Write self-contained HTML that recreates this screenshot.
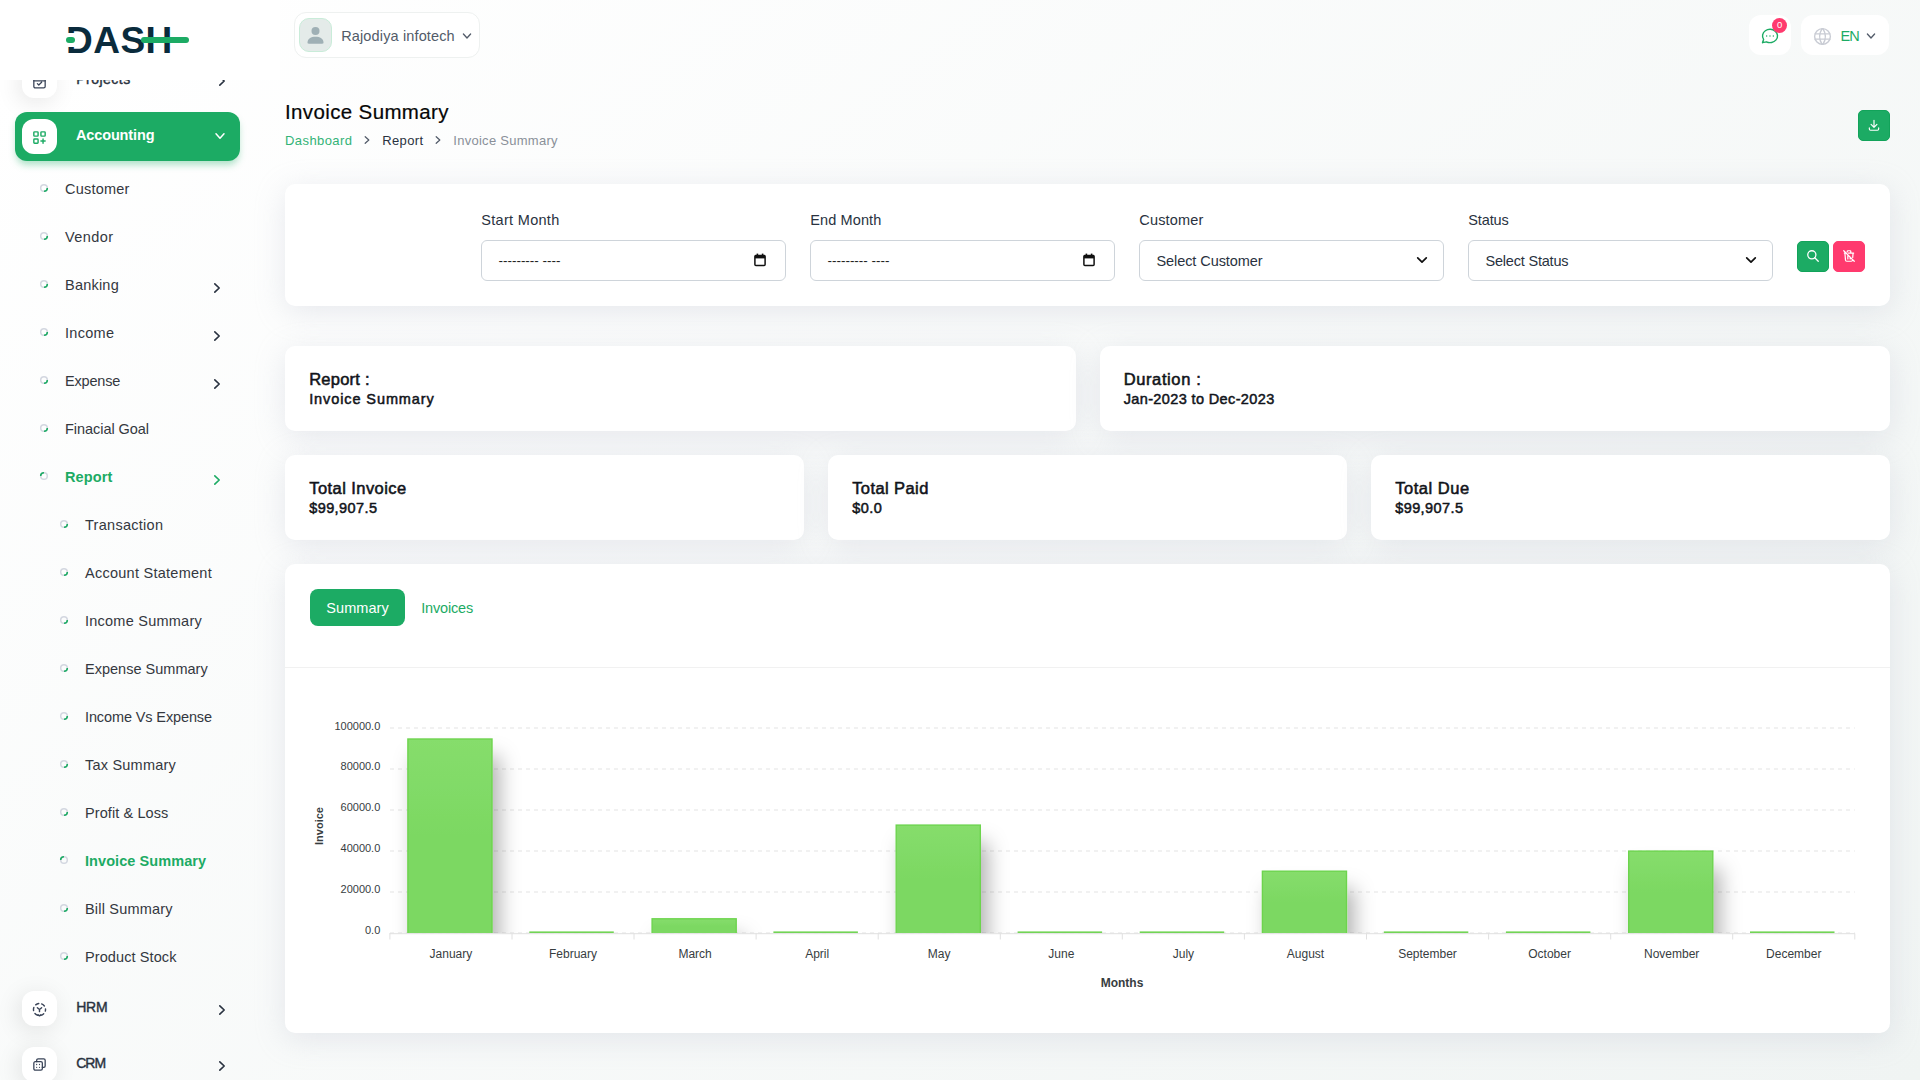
<!DOCTYPE html>
<html lang="en"><head><meta charset="utf-8"><title>Invoice Summary</title>
<style>

html,body{margin:0;padding:0}
body{width:1920px;height:1080px;overflow:hidden;position:relative;font-family:"Liberation Sans",sans-serif;color:#293240;
 background:linear-gradient(141.55deg,rgba(240,244,243,0) 3.46%,#f0f4f3 99.86%),#fff;}
.t{position:absolute;white-space:nowrap;line-height:1;}
.a{position:absolute;display:block;overflow:visible}
.card{position:absolute;background:#fff;border-radius:10px;box-shadow:0 6px 30px rgba(182,186,203,.3)}
.ibox{position:absolute;width:35px;height:35px;border-radius:12px;background:#fff;box-shadow:-3px 4px 23px rgba(0,0,0,.1)}
.inp{position:absolute;height:39px;width:303px;border:1px solid #ced4da;border-radius:6px;background:#fff}
.btn{position:absolute;width:30px;height:29px;border-radius:5px;border:1px solid}
nav,header,main{position:absolute;left:0;top:0}

</style></head><body>
<nav>
<div class="ibox" style="left:22px;top:62.5px"></div>
<svg class="a" style="left:31.2px;top:72.5px" width="17" height="17" viewBox="0 0 24 24" fill="none" stroke="#3a4458" stroke-width="1.8" stroke-linecap="round" stroke-linejoin="round"><rect x="4" y="5" width="16" height="16" rx="2"/><path d="M16 3v4M8 3v4M4 11h16M9 15l2 2l4-4" /></svg>
<span class="t" style="letter-spacing:0.49px;left:76.2px;top:72px;font-size:14px;font-weight:400;color:#293240;-webkit-text-stroke:.4px #293240;">Projects</span>
<svg class="a" style="left:215.5px;top:75px" width="12" height="12" viewBox="-6 -6 12 12"><path d="M-2.2 -4.2 L2.2 0 L-2.2 4.2" fill="none" stroke="#293240" stroke-width="1.6" stroke-linecap="round" stroke-linejoin="round"/></svg>
<div style="position:absolute;left:15px;top:112px;width:225px;height:49px;border-radius:12px;background:#1cab64;box-shadow:0 5px 7px -1px rgba(28,171,100,.35)"></div>
<div class="ibox" style="left:22px;top:119px;box-shadow:none"></div>
<svg class="a" style="left:31.2px;top:128.8px" width="17" height="17" viewBox="0 0 24 24" fill="none" stroke="#1cab64" stroke-width="2" stroke-linecap="round" stroke-linejoin="round"><rect x="4" y="4" width="6" height="6" rx="1"/><rect x="14" y="4" width="6" height="6" rx="1"/><rect x="4" y="14" width="6" height="6" rx="1"/><path d="M14 17h6M17 14v6"/></svg>
<span class="t" style="letter-spacing:-0.14px;left:76px;top:128px;font-size:14.5px;font-weight:700;color:#fff;">Accounting</span>
<svg class="a" style="left:213.4px;top:129px" width="14" height="14" viewBox="-7 -7 14 14"><path d="M-4 -2.2 L0 2.2 L4 -2.2" fill="none" stroke="#fff" stroke-width="1.5" stroke-linecap="round" stroke-linejoin="round"/></svg>
<svg class="a" style="left:38px;top:181.9px" width="12" height="12" viewBox="-6 -6 12 12"><circle r="3.3" fill="none" stroke="#d3d7e0" stroke-width="1.5"/><path d="M3.3 0 A3.3 3.3 0 0 1 0 3.3" transform="rotate(0)" fill="none" stroke="#1cab64" stroke-width="1.6"/></svg>
<span class="t" style="letter-spacing:0.22px;left:65px;top:182px;font-size:14.5px;font-weight:400;color:#34383f;">Customer</span>
<svg class="a" style="left:38px;top:229.9px" width="12" height="12" viewBox="-6 -6 12 12"><circle r="3.3" fill="none" stroke="#d3d7e0" stroke-width="1.5"/><path d="M3.3 0 A3.3 3.3 0 0 1 0 3.3" transform="rotate(0)" fill="none" stroke="#1cab64" stroke-width="1.6"/></svg>
<span class="t" style="letter-spacing:0.41px;left:65px;top:230px;font-size:14.5px;font-weight:400;color:#34383f;">Vendor</span>
<svg class="a" style="left:38px;top:277.9px" width="12" height="12" viewBox="-6 -6 12 12"><circle r="3.3" fill="none" stroke="#d3d7e0" stroke-width="1.5"/><path d="M3.3 0 A3.3 3.3 0 0 1 0 3.3" transform="rotate(0)" fill="none" stroke="#1cab64" stroke-width="1.6"/></svg>
<span class="t" style="letter-spacing:0.22px;left:65px;top:278px;font-size:14.5px;font-weight:400;color:#34383f;">Banking</span>
<svg class="a" style="left:211px;top:282px" width="12" height="12" viewBox="-6 -6 12 12"><path d="M-2.2 -4.2 L2.2 0 L-2.2 4.2" fill="none" stroke="#293240" stroke-width="1.6" stroke-linecap="round" stroke-linejoin="round"/></svg>
<svg class="a" style="left:38px;top:325.9px" width="12" height="12" viewBox="-6 -6 12 12"><circle r="3.3" fill="none" stroke="#d3d7e0" stroke-width="1.5"/><path d="M3.3 0 A3.3 3.3 0 0 1 0 3.3" transform="rotate(0)" fill="none" stroke="#1cab64" stroke-width="1.6"/></svg>
<span class="t" style="letter-spacing:0.29px;left:65px;top:326px;font-size:14.5px;font-weight:400;color:#34383f;">Income</span>
<svg class="a" style="left:211px;top:330px" width="12" height="12" viewBox="-6 -6 12 12"><path d="M-2.2 -4.2 L2.2 0 L-2.2 4.2" fill="none" stroke="#293240" stroke-width="1.6" stroke-linecap="round" stroke-linejoin="round"/></svg>
<svg class="a" style="left:38px;top:373.9px" width="12" height="12" viewBox="-6 -6 12 12"><circle r="3.3" fill="none" stroke="#d3d7e0" stroke-width="1.5"/><path d="M3.3 0 A3.3 3.3 0 0 1 0 3.3" transform="rotate(0)" fill="none" stroke="#1cab64" stroke-width="1.6"/></svg>
<span class="t" style="letter-spacing:-0.19px;left:65px;top:374px;font-size:14.5px;font-weight:400;color:#34383f;">Expense</span>
<svg class="a" style="left:211px;top:378px" width="12" height="12" viewBox="-6 -6 12 12"><path d="M-2.2 -4.2 L2.2 0 L-2.2 4.2" fill="none" stroke="#293240" stroke-width="1.6" stroke-linecap="round" stroke-linejoin="round"/></svg>
<svg class="a" style="left:38px;top:421.9px" width="12" height="12" viewBox="-6 -6 12 12"><circle r="3.3" fill="none" stroke="#d3d7e0" stroke-width="1.5"/><path d="M3.3 0 A3.3 3.3 0 0 1 0 3.3" transform="rotate(0)" fill="none" stroke="#1cab64" stroke-width="1.6"/></svg>
<span class="t" style="letter-spacing:-0.05px;left:65px;top:422px;font-size:14.5px;font-weight:400;color:#34383f;">Finacial Goal</span>
<svg class="a" style="left:38px;top:469.9px" width="12" height="12" viewBox="-6 -6 12 12"><circle r="3.3" fill="none" stroke="#d3d7e0" stroke-width="1.5"/><path d="M3.3 0 A3.3 3.3 0 0 1 0 3.3" transform="rotate(180)" fill="none" stroke="#1cab64" stroke-width="1.6"/></svg>
<span class="t" style="letter-spacing:0.11px;left:65px;top:470px;font-size:14.5px;font-weight:700;color:#1cab64;">Report</span>
<svg class="a" style="left:211px;top:474px" width="12" height="12" viewBox="-6 -6 12 12"><path d="M-2.2 -4.2 L2.2 0 L-2.2 4.2" fill="none" stroke="#1cab64" stroke-width="1.6" stroke-linecap="round" stroke-linejoin="round"/></svg>
<svg class="a" style="left:58px;top:517.9px" width="12" height="12" viewBox="-6 -6 12 12"><circle r="3.3" fill="none" stroke="#d3d7e0" stroke-width="1.5"/><path d="M3.3 0 A3.3 3.3 0 0 1 0 3.3" transform="rotate(0)" fill="none" stroke="#1cab64" stroke-width="1.6"/></svg>
<span class="t" style="letter-spacing:0.28px;left:85px;top:518px;font-size:14.5px;font-weight:400;color:#34383f;">Transaction</span>
<svg class="a" style="left:58px;top:565.9px" width="12" height="12" viewBox="-6 -6 12 12"><circle r="3.3" fill="none" stroke="#d3d7e0" stroke-width="1.5"/><path d="M3.3 0 A3.3 3.3 0 0 1 0 3.3" transform="rotate(0)" fill="none" stroke="#1cab64" stroke-width="1.6"/></svg>
<span class="t" style="letter-spacing:0.26px;left:85px;top:566px;font-size:14.5px;font-weight:400;color:#34383f;">Account Statement</span>
<svg class="a" style="left:58px;top:613.9px" width="12" height="12" viewBox="-6 -6 12 12"><circle r="3.3" fill="none" stroke="#d3d7e0" stroke-width="1.5"/><path d="M3.3 0 A3.3 3.3 0 0 1 0 3.3" transform="rotate(0)" fill="none" stroke="#1cab64" stroke-width="1.6"/></svg>
<span class="t" style="letter-spacing:0.24px;left:85px;top:614px;font-size:14.5px;font-weight:400;color:#34383f;">Income Summary</span>
<svg class="a" style="left:58px;top:661.9px" width="12" height="12" viewBox="-6 -6 12 12"><circle r="3.3" fill="none" stroke="#d3d7e0" stroke-width="1.5"/><path d="M3.3 0 A3.3 3.3 0 0 1 0 3.3" transform="rotate(0)" fill="none" stroke="#1cab64" stroke-width="1.6"/></svg>
<span class="t" style="letter-spacing:0.01px;left:85px;top:662px;font-size:14.5px;font-weight:400;color:#34383f;">Expense Summary</span>
<svg class="a" style="left:58px;top:709.9px" width="12" height="12" viewBox="-6 -6 12 12"><circle r="3.3" fill="none" stroke="#d3d7e0" stroke-width="1.5"/><path d="M3.3 0 A3.3 3.3 0 0 1 0 3.3" transform="rotate(0)" fill="none" stroke="#1cab64" stroke-width="1.6"/></svg>
<span class="t" style="letter-spacing:-0.12px;left:85px;top:710px;font-size:14.5px;font-weight:400;color:#34383f;">Income Vs Expense</span>
<svg class="a" style="left:58px;top:757.9px" width="12" height="12" viewBox="-6 -6 12 12"><circle r="3.3" fill="none" stroke="#d3d7e0" stroke-width="1.5"/><path d="M3.3 0 A3.3 3.3 0 0 1 0 3.3" transform="rotate(0)" fill="none" stroke="#1cab64" stroke-width="1.6"/></svg>
<span class="t" style="letter-spacing:0.21px;left:85px;top:758px;font-size:14.5px;font-weight:400;color:#34383f;">Tax Summary</span>
<svg class="a" style="left:58px;top:805.9px" width="12" height="12" viewBox="-6 -6 12 12"><circle r="3.3" fill="none" stroke="#d3d7e0" stroke-width="1.5"/><path d="M3.3 0 A3.3 3.3 0 0 1 0 3.3" transform="rotate(0)" fill="none" stroke="#1cab64" stroke-width="1.6"/></svg>
<span class="t" style="letter-spacing:0.09px;left:85px;top:806px;font-size:14.5px;font-weight:400;color:#34383f;">Profit &amp; Loss</span>
<svg class="a" style="left:58px;top:853.9px" width="12" height="12" viewBox="-6 -6 12 12"><circle r="3.3" fill="none" stroke="#d3d7e0" stroke-width="1.5"/><path d="M3.3 0 A3.3 3.3 0 0 1 0 3.3" transform="rotate(180)" fill="none" stroke="#1cab64" stroke-width="1.6"/></svg>
<span class="t" style="letter-spacing:0.07px;left:85px;top:854px;font-size:14.5px;font-weight:700;color:#1cab64;">Invoice Summary</span>
<svg class="a" style="left:58px;top:901.9px" width="12" height="12" viewBox="-6 -6 12 12"><circle r="3.3" fill="none" stroke="#d3d7e0" stroke-width="1.5"/><path d="M3.3 0 A3.3 3.3 0 0 1 0 3.3" transform="rotate(0)" fill="none" stroke="#1cab64" stroke-width="1.6"/></svg>
<span class="t" style="letter-spacing:0.20px;left:85px;top:902px;font-size:14.5px;font-weight:400;color:#34383f;">Bill Summary</span>
<svg class="a" style="left:58px;top:949.9px" width="12" height="12" viewBox="-6 -6 12 12"><circle r="3.3" fill="none" stroke="#d3d7e0" stroke-width="1.5"/><path d="M3.3 0 A3.3 3.3 0 0 1 0 3.3" transform="rotate(0)" fill="none" stroke="#1cab64" stroke-width="1.6"/></svg>
<span class="t" style="letter-spacing:0.10px;left:85px;top:950px;font-size:14.5px;font-weight:400;color:#34383f;">Product Stock</span>
<div class="ibox" style="left:22px;top:991px"></div>
<svg class="a" style="left:31.3px;top:1001px" width="17" height="17" viewBox="0 0 24 24" fill="none" stroke="#3a4458" stroke-width="2" stroke-linecap="round" stroke-linejoin="round"><circle cx="12" cy="12" r="8.5" stroke-dasharray="4.6 4.3" stroke-dashoffset="2.3"/><path d="M9 9.500l3 2.500l3-2.500M12 12v3M10 19.500l2 1.500l2-1.500"/></svg>
<span class="t" style="letter-spacing:-0.25px;left:76.2px;top:1000px;font-size:14px;font-weight:400;color:#293240;-webkit-text-stroke:.4px #293240;">HRM</span>
<svg class="a" style="left:215.5px;top:1004px" width="12" height="12" viewBox="-6 -6 12 12"><path d="M-2.2 -4.2 L2.2 0 L-2.2 4.2" fill="none" stroke="#293240" stroke-width="1.6" stroke-linecap="round" stroke-linejoin="round"/></svg>
<div class="ibox" style="left:22px;top:1047px"></div>
<svg class="a" style="left:31px;top:1056px" width="17" height="17" viewBox="0 0 24 24" fill="none" stroke="#3a4458" stroke-width="1.8" stroke-linecap="round" stroke-linejoin="round"><rect x="4" y="8" width="12" height="12" rx="2"/><path d="M8 8V6a2 2 0 0 1 2-2h8a2 2 0 0 1 2 2v8a2 2 0 0 1-2 2h-2M8 12v-0M12 12v0M8 16v0M12 16v0"/></svg>
<span class="t" style="letter-spacing:-1.00px;left:76.2px;top:1056px;font-size:14px;font-weight:400;color:#293240;-webkit-text-stroke:.4px #293240;">CRM</span>
<svg class="a" style="left:215.5px;top:1060px" width="12" height="12" viewBox="-6 -6 12 12"><path d="M-2.2 -4.2 L2.2 0 L-2.2 4.2" fill="none" stroke="#293240" stroke-width="1.6" stroke-linecap="round" stroke-linejoin="round"/></svg>
<div style="position:absolute;left:0;top:0;width:280px;height:80px;background:#fff"></div>
<div id="logo" style="position:absolute;left:65px;top:25px;width:125px;height:30px"><span class="t" style="left:1px;top:-3.5px;font-size:37px;font-weight:700;color:#0a2b3c;letter-spacing:.5px">DASH</span><i style="position:absolute;left:2px;top:8.3px;width:8px;height:13.4px;background:#fff"></i><i style="position:absolute;left:.5px;top:12px;width:9px;height:6px;border-radius:3px;background:#1cab64"></i><i style="position:absolute;left:76.300px;top:12px;width:47.500px;height:6px;border-radius:3px;background:#1cab64"></i></div>
</nav>
<header>
<div style="position:absolute;left:293.500px;top:12px;width:184px;height:44px;border:1px solid #eef1f0;border-radius:12px;background:#fff"></div>
<div style="position:absolute;left:299px;top:18px;width:33px;height:34px;border-radius:10px;background:#e4ebe9;border:1px solid #c9ecd9;box-sizing:border-box"></div>
<svg class="a" style="left:306px;top:25px" width="19" height="20" viewBox="0 0 19 20"><circle cx="9.5" cy="6" r="4" fill="#9fb0b5"/><path d="M1.5 17.5c0-4 3.5-5.8 8-5.8s8 1.800 8 5.800c0 .8-.5 1.200-1.300 1.200H2.800c-.8 0-1.300-.4-1.300-1.200z" fill="#9fb0b5"/></svg>
<span class="t" style="letter-spacing:0.14px;left:341.2px;top:29px;font-size:14.5px;font-weight:400;color:#525b69;">Rajodiya infotech</span>
<svg class="a" style="left:460px;top:29px" width="14" height="14" viewBox="-7 -7 14 14"><path d="M-3.6 -2 L0 2 L3.6 -2" fill="none" stroke="#525b69" stroke-width="1.3" stroke-linecap="round" stroke-linejoin="round"/></svg>
<div style="position:absolute;left:1749px;top:15px;width:42px;height:40px;border-radius:12px;background:#fff"></div>
<svg class="a" style="left:1760px;top:26px" width="20" height="20" viewBox="0 0 24 24" fill="none" stroke="#1cab64" stroke-width="1.7" stroke-linecap="round" stroke-linejoin="round"><path d="M3 20l1.300-3.900C1.976 12.663 2.874 8.228 6.400 5.726c3.526-2.501 8.590-2.296 11.845.480c3.255 2.777 3.695 7.266 1.029 10.501C16.608 19.942 11.659 20.922 7.700 19L3 20"/><path d="M12 12v.01M8 12v.01M16 12v.01"/></svg>
<div style="position:absolute;left:1772px;top:17.500px;width:15px;height:15px;border-radius:50%;background:#ff3a6e"></div>
<span class="t" style="left:1779.6px;transform:translateX(-50%);top:20px;font-size:9.5px;font-weight:400;color:#fff;">0</span>
<div style="position:absolute;left:1801px;top:15px;width:88px;height:40px;border-radius:12px;background:#fff"></div>
<svg class="a" style="left:1811.5px;top:25.5px" width="21" height="21" viewBox="0 0 24 24" fill="none" stroke="#c9ccd4" stroke-width="1.6" stroke-linecap="round" stroke-linejoin="round"><circle cx="12" cy="12" r="9"/><path d="M3.6 9h16.800M3.600 15h16.800M11.500 3a17 17 0 0 0 0 18M12.500 3a17 17 0 0 1 0 18"/></svg>
<span class="t" style="letter-spacing:-1.00px;left:1840.6px;top:29px;font-size:14.5px;font-weight:400;color:#1cab64;">EN</span>
<svg class="a" style="left:1864px;top:28.5px" width="14" height="14" viewBox="-7 -7 14 14"><path d="M-3.6 -2 L0 2 L3.6 -2" fill="none" stroke="#525b69" stroke-width="1.3" stroke-linecap="round" stroke-linejoin="round"/></svg>
</header>
<main>
<span class="t" style="letter-spacing:0.37px;left:285px;top:102px;font-size:20.5px;font-weight:400;color:#060606;-webkit-text-stroke:.2px #060606;">Invoice Summary</span>
<span class="t" style="letter-spacing:0.42px;left:285px;top:134px;font-size:13px;font-weight:400;color:#33b377;">Dashboard</span>
<svg class="a" style="left:361px;top:134.1px" width="12" height="12" viewBox="-6 -6 12 12"><path d="M-1.8 -3.3 L1.8 0 L-1.8 3.3" fill="none" stroke="#525b69" stroke-width="1.25" stroke-linecap="round" stroke-linejoin="round"/></svg>
<span class="t" style="letter-spacing:0.39px;left:382.2px;top:134px;font-size:13px;font-weight:400;color:#293240;">Report</span>
<svg class="a" style="left:432.2px;top:134.1px" width="12" height="12" viewBox="-6 -6 12 12"><path d="M-1.8 -3.3 L1.8 0 L-1.8 3.3" fill="none" stroke="#525b69" stroke-width="1.25" stroke-linecap="round" stroke-linejoin="round"/></svg>
<span class="t" style="letter-spacing:0.27px;left:453.3px;top:134px;font-size:13px;font-weight:400;color:#8a9099;">Invoice Summary</span>
<div class="btn" style="left:1858px;top:110px;background:#1cab64;border-color:#12a35a"></div>
<svg class="a" style="left:1867px;top:118px" width="14" height="14" viewBox="0 0 24 24" fill="none" stroke="#fff" stroke-width="2" stroke-linecap="round" stroke-linejoin="round"><path d="M4 17v2a2 2 0 0 0 2 2h12a2 2 0 0 0 2-2v-2M7 11l5 5l5-5M12 4v12"/></svg>
<div class="card" style="left:285px;top:184px;width:1605px;height:122px"></div>
<span class="t" style="letter-spacing:0.30px;left:481.3px;top:213px;font-size:14.5px;font-weight:400;color:#293240;">Start Month</span>
<div class="inp" style="left:481px;top:240px"></div>
<span class="t" style="letter-spacing:-0.02px;left:498.5px;top:254px;font-size:13.5px;font-weight:400;color:#222;">--------- ----</span>
<svg class="a" style="left:754px;top:253px" width="12" height="14" viewBox="0 0 12 14"><rect x="0.900" y="2.400" width="10.200" height="10.200" rx="1" fill="none" stroke="#111" stroke-width="1.500"/><rect x="0.900" y="2.400" width="10.200" height="3" fill="#111"/><rect x="2.600" y="0.600" width="1.600" height="2.500" fill="#111"/><rect x="7.800" y="0.600" width="1.600" height="2.500" fill="#111"/></svg>
<span class="t" style="letter-spacing:0.11px;left:810.3px;top:213px;font-size:14.5px;font-weight:400;color:#293240;">End Month</span>
<div class="inp" style="left:810px;top:240px"></div>
<span class="t" style="letter-spacing:-0.02px;left:827.5px;top:254px;font-size:13.5px;font-weight:400;color:#222;">--------- ----</span>
<svg class="a" style="left:1083px;top:253px" width="12" height="14" viewBox="0 0 12 14"><rect x="0.900" y="2.400" width="10.200" height="10.200" rx="1" fill="none" stroke="#111" stroke-width="1.500"/><rect x="0.900" y="2.400" width="10.200" height="3" fill="#111"/><rect x="2.600" y="0.600" width="1.600" height="2.500" fill="#111"/><rect x="7.800" y="0.600" width="1.600" height="2.500" fill="#111"/></svg>
<span class="t" style="letter-spacing:0.16px;left:1139.3px;top:213px;font-size:14.5px;font-weight:400;color:#293240;">Customer</span>
<div class="inp" style="left:1139px;top:240px"></div>
<span class="t" style="letter-spacing:-0.08px;left:1156.5px;top:254px;font-size:14.5px;font-weight:400;color:#293240;">Select Customer</span>
<svg class="a" style="left:1414.5px;top:253.2px" width="14" height="14" viewBox="-7 -7 14 14"><path d="M-4.3 -2.2 L0 2.2 L4.3 -2.2" fill="none" stroke="#111" stroke-width="1.7" stroke-linecap="round" stroke-linejoin="round"/></svg>
<span class="t" style="letter-spacing:-0.12px;left:1468.3px;top:213px;font-size:14.5px;font-weight:400;color:#293240;">Status</span>
<div class="inp" style="left:1468px;top:240px"></div>
<span class="t" style="letter-spacing:-0.20px;left:1485.5px;top:254px;font-size:14.5px;font-weight:400;color:#293240;">Select Status</span>
<svg class="a" style="left:1743.5px;top:253.2px" width="14" height="14" viewBox="-7 -7 14 14"><path d="M-4.3 -2.2 L0 2.2 L4.3 -2.2" fill="none" stroke="#111" stroke-width="1.7" stroke-linecap="round" stroke-linejoin="round"/></svg>
<div class="btn" style="left:1797px;top:241px;background:#1cab64;border-color:#12a35a"></div>
<svg class="a" style="left:1806px;top:249.3px" width="14" height="14" viewBox="0 0 24 24" fill="none" stroke="#fff" stroke-width="2.2" stroke-linecap="round" stroke-linejoin="round"><circle cx="10" cy="10" r="7"/><path d="M21 21l-6-6"/></svg>
<div class="btn" style="left:1833px;top:241px;background:#ff3a6e;border-color:#ff3a6e"></div>
<svg class="a" style="left:1842px;top:249.3px" width="14" height="14" viewBox="0 0 24 24" fill="none" stroke="#fff" stroke-width="2.1" stroke-linecap="round" stroke-linejoin="round"><path d="M3 3l18 18M4 7h3m4 0h9M10 11v6M14 14v3M5 7l1 12a2 2 0 0 0 2 2h8a2 2 0 0 0 2-1.991M18.384 14.373L19 7M9 5V4a1 1 0 0 1 1-1h4a1 1 0 0 1 1 1v3"/></svg>
<div class="card" style="left:285px;top:346px;width:791px;height:84.600px"></div>
<span class="t" style="letter-spacing:0.23px;left:309.2px;top:371px;font-size:16.5px;font-weight:400;color:#11141a;-webkit-text-stroke:.55px #11141a;">Report :</span>
<span class="t" style="letter-spacing:0.90px;left:309.2px;top:392px;font-size:14.5px;font-weight:400;color:#11141a;-webkit-text-stroke:.5px #11141a;">Invoice Summary</span>
<div class="card" style="left:1099.5px;top:346px;width:790.5px;height:84.600px"></div>
<span class="t" style="letter-spacing:0.61px;left:1123.7px;top:371px;font-size:16.5px;font-weight:400;color:#11141a;-webkit-text-stroke:.55px #11141a;">Duration :</span>
<span class="t" style="letter-spacing:0.37px;left:1123.7px;top:392px;font-size:14.5px;font-weight:400;color:#11141a;-webkit-text-stroke:.5px #11141a;">Jan-2023 to Dec-2023</span>
<div class="card" style="left:285px;top:455px;width:519px;height:84.600px"></div>
<span class="t" style="letter-spacing:0.44px;left:309.2px;top:480px;font-size:16.5px;font-weight:400;color:#11141a;-webkit-text-stroke:.55px #11141a;">Total Invoice</span>
<span class="t" style="letter-spacing:0.41px;left:309.2px;top:501px;font-size:14.5px;font-weight:400;color:#11141a;-webkit-text-stroke:.5px #11141a;">$99,907.5</span>
<div class="card" style="left:828px;top:455px;width:519px;height:84.600px"></div>
<span class="t" style="letter-spacing:0.41px;left:852.2px;top:480px;font-size:16.5px;font-weight:400;color:#11141a;-webkit-text-stroke:.55px #11141a;">Total Paid</span>
<span class="t" style="letter-spacing:0.49px;left:852.2px;top:501px;font-size:14.5px;font-weight:400;color:#11141a;-webkit-text-stroke:.5px #11141a;">$0.0</span>
<div class="card" style="left:1371px;top:455px;width:519px;height:84.600px"></div>
<span class="t" style="letter-spacing:0.54px;left:1395.2px;top:480px;font-size:16.5px;font-weight:400;color:#11141a;-webkit-text-stroke:.55px #11141a;">Total Due</span>
<span class="t" style="letter-spacing:0.41px;left:1395.2px;top:501px;font-size:14.5px;font-weight:400;color:#11141a;-webkit-text-stroke:.5px #11141a;">$99,907.5</span>
<div class="card" style="left:285px;top:564px;width:1605px;height:469px"></div>
<div style="position:absolute;left:310px;top:589px;width:95px;height:37px;border-radius:8px;background:#1cab64"></div>
<span class="t" style="letter-spacing:0.06px;left:326.3px;top:601px;font-size:14.5px;font-weight:400;color:#fff;">Summary</span>
<span class="t" style="letter-spacing:-0.17px;left:421.2px;top:601px;font-size:14.5px;font-weight:400;color:#1cab64;">Invoices</span>
<div style="position:absolute;left:285px;top:667px;width:1605px;height:1px;background:#f1f1f1"></div>
<svg class="a" id="chart" style="left:0;top:0" width="1920" height="1080" viewBox="0 0 1920 1080" font-family="Liberation Sans, Helvetica, Arial, sans-serif"><defs><filter id="ds" x="-50%" y="-50%" width="200%" height="200%"><feDropShadow dx="7" dy="18" stdDeviation="10" flood-color="#000" flood-opacity=".3"/></filter><clipPath id="cp"><rect x="385.9" y="718" width="1472.9" height="215"/></clipPath><linearGradient id="bg" x1="0" y1="0" x2="0" y2="1"><stop offset="0" stop-color="#86dd6c"/><stop offset="0.500" stop-color="#7cd862"/><stop offset="1" stop-color="#7cd862"/></linearGradient></defs><line x1="390.0" x2="1854.8" y1="728.0" y2="728.0" stroke="#e3e3e3" stroke-width="1" stroke-dasharray="4"/><text x="380.300" y="730.0" text-anchor="end" font-size="11" fill="#373d3f">100000.0</text><line x1="390.0" x2="1854.8" y1="769.0" y2="769.0" stroke="#e3e3e3" stroke-width="1" stroke-dasharray="4"/><text x="380.300" y="770.0" text-anchor="end" font-size="11" fill="#373d3f">80000.0</text><line x1="390.0" x2="1854.8" y1="810.0" y2="810.0" stroke="#e3e3e3" stroke-width="1" stroke-dasharray="4"/><text x="380.300" y="811.0" text-anchor="end" font-size="11" fill="#373d3f">60000.0</text><line x1="390.0" x2="1854.8" y1="851.0" y2="851.0" stroke="#e3e3e3" stroke-width="1" stroke-dasharray="4"/><text x="380.300" y="852.0" text-anchor="end" font-size="11" fill="#373d3f">40000.0</text><line x1="390.0" x2="1854.8" y1="892.0" y2="892.0" stroke="#e3e3e3" stroke-width="1" stroke-dasharray="4"/><text x="380.300" y="893.0" text-anchor="end" font-size="11" fill="#373d3f">20000.0</text><line x1="390.0" x2="1854.8" y1="933.0" y2="933.0" stroke="#e3e3e3" stroke-width="1" stroke-dasharray="4"/><text x="380.300" y="934.0" text-anchor="end" font-size="11" fill="#373d3f">0.0</text><line x1="389.4" x2="1854.8" y1="933.7" y2="933.7" stroke="#e0e0e0" stroke-width="1"/><line x1="389.9" x2="389.9" y1="933.5" y2="939.5" stroke="#e0e0e0" stroke-width="1"/><line x1="512.0" x2="512.0" y1="933.5" y2="939.5" stroke="#e0e0e0" stroke-width="1"/><line x1="634.0" x2="634.0" y1="933.5" y2="939.5" stroke="#e0e0e0" stroke-width="1"/><line x1="756.1" x2="756.1" y1="933.5" y2="939.5" stroke="#e0e0e0" stroke-width="1"/><line x1="878.2" x2="878.2" y1="933.5" y2="939.5" stroke="#e0e0e0" stroke-width="1"/><line x1="1000.3" x2="1000.3" y1="933.5" y2="939.5" stroke="#e0e0e0" stroke-width="1"/><line x1="1122.3" x2="1122.3" y1="933.5" y2="939.5" stroke="#e0e0e0" stroke-width="1"/><line x1="1244.4" x2="1244.4" y1="933.5" y2="939.5" stroke="#e0e0e0" stroke-width="1"/><line x1="1366.5" x2="1366.5" y1="933.5" y2="939.5" stroke="#e0e0e0" stroke-width="1"/><line x1="1488.6" x2="1488.6" y1="933.5" y2="939.5" stroke="#e0e0e0" stroke-width="1"/><line x1="1610.7" x2="1610.7" y1="933.5" y2="939.5" stroke="#e0e0e0" stroke-width="1"/><line x1="1732.7" x2="1732.7" y1="933.5" y2="939.5" stroke="#e0e0e0" stroke-width="1"/><line x1="1854.8" x2="1854.8" y1="933.5" y2="939.5" stroke="#e0e0e0" stroke-width="1"/><g clip-path="url(#cp)"><rect x="407.9" y="739.0" width="84.1" height="194.8" fill="url(#bg)" stroke="#6dd44e" stroke-width="1.400" filter="url(#ds)"/><rect x="529.3" y="931.4" width="84.5" height="2.2" fill="#72d455"/><rect x="652.1" y="918.8" width="84.1" height="14.9" fill="url(#bg)" stroke="#6dd44e" stroke-width="1.400" filter="url(#ds)"/><rect x="773.4" y="931.4" width="84.5" height="2.2" fill="#72d455"/><rect x="896.2" y="825.1" width="84.1" height="108.7" fill="url(#bg)" stroke="#6dd44e" stroke-width="1.400" filter="url(#ds)"/><rect x="1017.6" y="931.4" width="84.5" height="2.2" fill="#72d455"/><rect x="1139.7" y="931.4" width="84.5" height="2.2" fill="#72d455"/><rect x="1262.4" y="871.2" width="84.1" height="62.5" fill="url(#bg)" stroke="#6dd44e" stroke-width="1.400" filter="url(#ds)"/><rect x="1383.8" y="931.4" width="84.5" height="2.2" fill="#72d455"/><rect x="1505.9" y="931.4" width="84.5" height="2.2" fill="#72d455"/><rect x="1628.7" y="851.1" width="84.1" height="82.6" fill="url(#bg)" stroke="#6dd44e" stroke-width="1.400" filter="url(#ds)"/><rect x="1750.0" y="931.4" width="84.5" height="2.2" fill="#72d455"/></g><text x="450.9" y="957.700" text-anchor="middle" font-size="12" fill="#373d3f">January</text><text x="573.0" y="957.700" text-anchor="middle" font-size="12" fill="#373d3f">February</text><text x="695.1" y="957.700" text-anchor="middle" font-size="12" fill="#373d3f">March</text><text x="817.2" y="957.700" text-anchor="middle" font-size="12" fill="#373d3f">April</text><text x="939.2" y="957.700" text-anchor="middle" font-size="12" fill="#373d3f">May</text><text x="1061.3" y="957.700" text-anchor="middle" font-size="12" fill="#373d3f">June</text><text x="1183.4" y="957.700" text-anchor="middle" font-size="12" fill="#373d3f">July</text><text x="1305.5" y="957.700" text-anchor="middle" font-size="12" fill="#373d3f">August</text><text x="1427.5" y="957.700" text-anchor="middle" font-size="12" fill="#373d3f">September</text><text x="1549.6" y="957.700" text-anchor="middle" font-size="12" fill="#373d3f">October</text><text x="1671.7" y="957.700" text-anchor="middle" font-size="12" fill="#373d3f">November</text><text x="1793.8" y="957.700" text-anchor="middle" font-size="12" fill="#373d3f">December</text><text x="1122" y="987" text-anchor="middle" font-size="12" font-weight="700" fill="#373d3f">Months</text><text transform="translate(323.200,826) rotate(-90)" text-anchor="middle" font-size="11" font-weight="700" fill="#373d3f">Invoice</text></svg>
</main>
</body></html>
